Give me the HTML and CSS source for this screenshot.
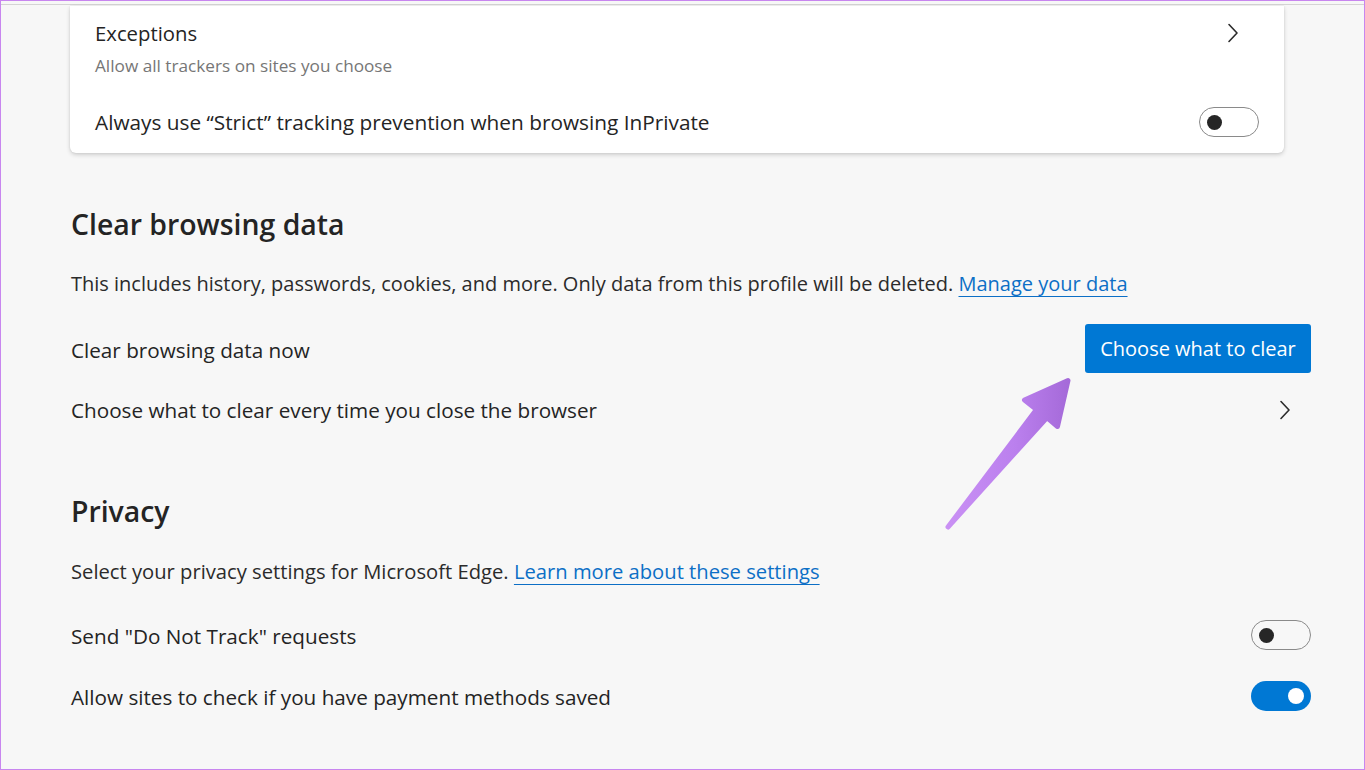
FILE: index.html
```html
<!DOCTYPE html>
<html lang="en">
<head>
<meta charset="utf-8">
<title>Settings - Privacy</title>
<link rel="stylesheet" href="styles.css">
</head>
<body>
<div class="frame">
  <div class="topline"></div>
  <div class="content">
    <div class="card">
      <div class="card-row first">
        <div class="card-text">
          <div class="card-title">Exceptions</div>
          <div class="card-sub">Allow all trackers on sites you choose</div>
        </div>
        <svg class="chev card-chev" viewBox="0 0 12 20" width="12" height="20"><polyline points="2,1.5 10,10 2,18.5"/></svg>
      </div>
      <div class="card-row second">
        <div class="card-title wide">Always use “Strict” tracking prevention when browsing InPrivate</div>
        <span class="toggle off"><span class="knob"></span></span>
      </div>
    </div>

    <section class="section clear">
      <h2 class="heading">Clear browsing data</h2>
      <p class="desc">This includes history, passwords, cookies, and more. Only data from this profile will be deleted. <a class="link" href="#">Manage your data</a></p>
      <div class="row row-button">
        <span class="label">Clear browsing data now</span>
        <button class="btn">Choose what to clear</button>
      </div>
      <div class="row row-chev">
        <span class="label">Choose what to clear every time you close the browser</span>
        <svg class="chev sec-chev" viewBox="0 0 12 20" width="12" height="20"><polyline points="2,1.5 10,10 2,18.5"/></svg>
      </div>
    </section>

    <section class="section privacy">
      <h2 class="heading">Privacy</h2>
      <p class="desc">Select your privacy settings for Microsoft Edge. <a class="link" href="#">Learn more about these settings</a></p>
      <div class="row row-toggle first-toggle">
        <span class="label">Send "Do Not Track" requests</span>
        <span class="toggle off"><span class="knob"></span></span>
      </div>
      <div class="row row-toggle second-toggle">
        <span class="label">Allow sites to check if you have payment methods saved</span>
        <span class="toggle on"><span class="knob"></span></span>
      </div>
    </section>
  </div>

  <svg class="arrow" viewBox="940 370 140 165" width="140" height="165">
    <defs>
      <linearGradient id="ag" x1="0" y1="0" x2="1" y2="0">
        <stop offset="0" stop-color="#c990f4"/>
        <stop offset="0.55" stop-color="#bb80ee"/>
        <stop offset="1" stop-color="#a56ad9"/>
      </linearGradient>
    </defs>
    <path d="M948,527 L1036.5,409.5 L1024.5,400 L1068,380.5 L1057.5,426.5 L1047,417.5 Z" fill="url(#ag)" stroke="url(#ag)" stroke-width="5" stroke-linejoin="round"/>
  </svg>
</div>
</body>
</html>
```

FILE: styles.css
```css
html, body {
  margin: 0;
  padding: 0;
}
body {
  font-family: "Open Sans", "Noto Sans", "Liberation Sans", sans-serif;
  color: #242424;
  background: #f7f7f7;
}
.frame {
  position: relative;
  width: 1365px;
  height: 770px;
  box-sizing: border-box;
  border: 1px solid #c886ef;
  background: #f7f7f7;
  overflow: hidden;
}
.topline {
  height: 1px;
  margin-top: 3px;
  background: #d4d4d4;
}
.content {
  padding-left: 69px;
  width: 1240px;
}

/* card */
.card {
  width: 1214px;
  box-sizing: border-box;
  margin-top: 1px;
  background: #ffffff;
  border-radius: 0 0 6px 6px;
  box-shadow: 0 2px 4px rgba(0, 0, 0, 0.16), 0 0 2px rgba(0, 0, 0, 0.1);
  padding: 13px 25px 16px 25px;
}
.card-row {
  display: flex;
  align-items: center;
  justify-content: space-between;
}
.card-row.first {
  align-items: flex-start;
}
.card-title {
  font-size: 20.3px;
  line-height: 28px;
  color: #242424;
}
.card-title.wide {
  font-size: 20.8px;
}
.card-sub {
  margin-top: 7px;
  font-size: 17.2px;
  line-height: 24px;
  color: #767676;
}
.card-chev {
  margin-top: 4px;
  margin-right: 20px;
}
.card-row.second {
  margin-top: 29px;
  height: 30px;
}

/* chevrons */
.chev polyline {
  fill: none;
  stroke: #2b2b2b;
  stroke-width: 1.6;
  stroke-linecap: round;
  stroke-linejoin: round;
}

/* sections */
.section {
  width: 1240px;
  margin-left: 1px;
}
.heading {
  margin: 0;
  font-size: 28.4px;
  font-weight: 600;
  line-height: 36px;
  color: #242424;
}
.clear .heading {
  margin-top: 53px;
}
.privacy .heading {
  margin-top: 69px;
}
.desc {
  margin: 28px 0 0 0;
  font-size: 20px;
  line-height: 28px;
  color: #2b2b2b;
}
.privacy .desc {
  font-size: 20.2px;
}
.link {
  color: #0c6fc6;
  text-decoration: underline;
  text-decoration-thickness: 1px;
  text-underline-offset: 5px;
}
.row {
  display: flex;
  align-items: center;
  justify-content: space-between;
}
.label {
  font-size: 20.7px;
  line-height: 28px;
  color: #242424;
}
.row-button {
  margin-top: 26px;
  height: 49px;
}
.row-button .label {
  position: relative;
  top: 1px;
}
.btn {
  font-family: inherit;
  font-size: 20px;
  line-height: 28px;
  color: #ffffff;
  background: #0078d4;
  border: none;
  border-radius: 3px;
  height: 49px;
  width: 226px;
  padding: 0;
}
.row-chev {
  margin-top: 23px;
  height: 28px;
}
.sec-chev {
  margin-right: 20px;
}
.row-toggle {
  height: 30px;
}
.first-toggle {
  margin-top: 35px;
}
.second-toggle {
  margin-top: 31px;
}
.row-toggle .label {
  position: relative;
  top: 1px;
}

/* toggles */
.toggle {
  display: flex;
  align-items: center;
  width: 60px;
  height: 30px;
  box-sizing: border-box;
  border-radius: 15px;
  flex-shrink: 0;
}
.toggle.off {
  border: 1px solid #8a8a8a;
  background: transparent;
  padding-left: 7px;
}
.toggle.on {
  background: #0078d4;
  justify-content: flex-end;
  padding-right: 7px;
}
.knob {
  display: block;
  border-radius: 50%;
}
.toggle.off .knob {
  width: 15px;
  height: 15px;
  background: #262626;
}
.toggle.on .knob {
  width: 16px;
  height: 16px;
  background: #ffffff;
}

/* annotation arrow */
.arrow {
  position: absolute;
  left: 939px;
  top: 369px;
}
```
